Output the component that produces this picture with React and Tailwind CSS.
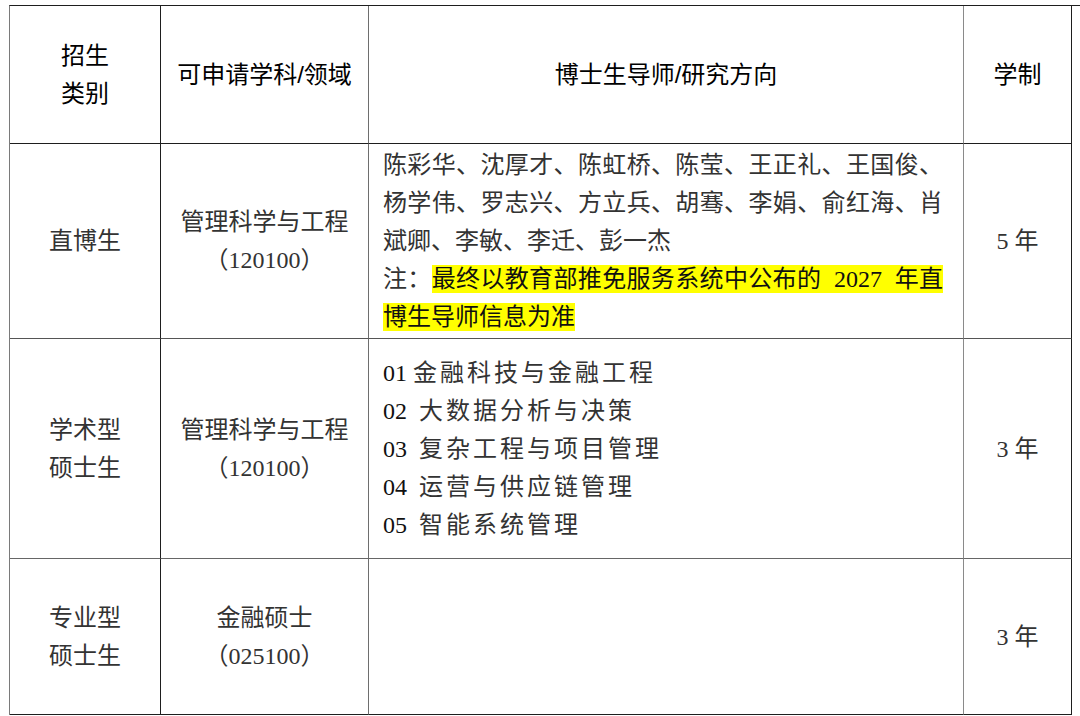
import React from "react";

const serif = { fontFamily: "'Liberation Serif', 'Noto Sans CJK SC', serif" };

export default function App() {
  return (
    <div className="w-[1080px] h-[716px] bg-white pt-[5px] pl-[9px]">
      <div
        className="grid grid-cols-[151px_208px_595px_108px] grid-rows-[138px_195px_220px_156px] border-t border-l border-t-[#1e1e1e] border-l-[#7a7a7a] text-[#1c1c1c]"
        style={{ fontFamily: "'Liberation Sans', 'Noto Sans CJK SC', sans-serif" }}
      >
        {/* header */}
        <div className="border-r border-b border-r-[#1e1e1e] border-b-[#1e1e1e] flex flex-col items-center justify-center text-[24px] leading-[38px] text-black">
          <div>招生</div>
          <div>类别</div>
        </div>
        <div className="border-r border-b border-r-[#6e6e6e] border-b-[#1e1e1e] flex items-center justify-center text-[24px] text-black">
          可申请学科/领域
        </div>
        <div className="border-r border-b border-r-[#8a8a8a] border-b-[#1e1e1e] flex items-center justify-center text-[24px] text-black">
          博士生导师/研究方向
        </div>
        <div className="border-r border-b border-r-[#1e1e1e] border-b-[#1e1e1e] flex items-center justify-center text-[24px] text-black">
          学制
        </div>

        {/* row 1 */}
        <div style={serif} className="border-r border-b border-r-[#1e1e1e] border-b-[#555] flex flex-col items-center justify-center text-[24px] leading-[38px] text-[#333]">
          <div>直博生</div>
        </div>
        <div style={serif} className="border-r border-b border-r-[#6e6e6e] border-b-[#555] flex flex-col items-center justify-center text-[24px] leading-[38px] text-[#333]">
          <div>管理科学与工程</div>
          <div>（120100）</div>
        </div>
        <div style={serif} className="border-r border-b border-r-[#8a8a8a] border-b-[#555] flex flex-col justify-center pl-[14px] pr-[20px] text-[24px] leading-[38px] text-[#333]">
          <div className="text-justify [text-align-last:justify]">陈彩华、沈厚才、陈虹桥、陈莹、王正礼、王国俊、</div>
          <div className="text-justify [text-align-last:justify]">杨学伟、罗志兴、方立兵、胡骞、李娟、俞红海、肖</div>
          <div>斌卿、李敏、李迁、彭一杰</div>
          <div className="text-justify [text-align-last:justify]">
            注：<span className="bg-[#ffff00] text-[#111] py-[1px]">最终以教育部推免服务系统中公布的&nbsp; 2027&nbsp; 年直</span>
          </div>
          <div>
            <span className="bg-[#ffff00] text-[#111] py-[1px]">博生导师信息为准</span>
          </div>
        </div>
        <div style={serif} className="border-r border-b border-r-[#1e1e1e] border-b-[#555] flex items-center justify-center text-[24px] text-[#333]">
          5 年
        </div>

        {/* row 2 */}
        <div style={serif} className="border-r border-b border-r-[#1e1e1e] border-b-[#666] flex flex-col items-center justify-center text-[24px] leading-[38px] text-[#333]">
          <div>学术型</div>
          <div>硕士生</div>
        </div>
        <div style={serif} className="border-r border-b border-r-[#6e6e6e] border-b-[#666] flex flex-col items-center justify-center text-[24px] leading-[38px] text-[#333]">
          <div>管理科学与工程</div>
          <div>（120100）</div>
        </div>
        <div style={serif} className="border-r border-b border-r-[#8a8a8a] border-b-[#666] flex flex-col justify-center pl-[14px] text-[24px] leading-[38px] text-[#333]">
          <div><span className="text-[#111]">01</span>&nbsp;<span className="tracking-[3px]">金融科技与金融工程</span></div>
          <div><span className="text-[#111]">02</span>&nbsp;&nbsp;<span className="tracking-[3px]">大数据分析与决策</span></div>
          <div><span className="text-[#111]">03</span>&nbsp;&nbsp;<span className="tracking-[3px]">复杂工程与项目管理</span></div>
          <div><span className="text-[#111]">04</span>&nbsp;&nbsp;<span className="tracking-[3px]">运营与供应链管理</span></div>
          <div><span className="text-[#111]">05</span>&nbsp;&nbsp;<span className="tracking-[3px]">智能系统管理</span></div>
        </div>
        <div style={serif} className="border-r border-b border-r-[#1e1e1e] border-b-[#666] flex items-center justify-center text-[24px] text-[#333]">
          3 年
        </div>

        {/* row 3 */}
        <div style={serif} className="border-r border-b border-r-[#1e1e1e] border-b-[#1e1e1e] flex flex-col items-center justify-center text-[24px] leading-[38px] text-[#333]">
          <div>专业型</div>
          <div>硕士生</div>
        </div>
        <div style={serif} className="border-r border-b border-r-[#6e6e6e] border-b-[#1e1e1e] flex flex-col items-center justify-center text-[24px] leading-[38px] text-[#333]">
          <div>金融硕士</div>
          <div>（025100）</div>
        </div>
        <div className="border-r border-b border-r-[#8a8a8a] border-b-[#1e1e1e]"></div>
        <div style={serif} className="border-r border-b border-r-[#1e1e1e] border-b-[#1e1e1e] flex items-center justify-center text-[24px] text-[#333]">
          3 年
        </div>
      </div>
    </div>
  );
}
